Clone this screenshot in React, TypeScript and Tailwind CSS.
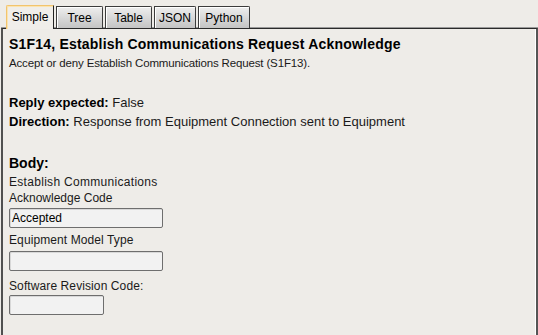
import React from "react";

function Tab({ children, selected, w }: { children: React.ReactNode; selected?: boolean; w: string }) {
  if (selected) {
    return (
      <div
        className={`${w} h-[24px] -mb-px flex items-center justify-center border-l border-t border-[#f2c46e] border-r border-r-[#222] bg-[#f0eeea] text-[12px] leading-none text-black shadow-[inset_1px_1px_0_#fbe4b0] rounded-tl-[2px]`}
      >
        <span className="-mt-[1px]">{children}</span>
      </div>
    );
  }
  return (
    <div
      className={`${w} h-[22px] flex items-center justify-center border border-b-0 border-[#3c3c3c] bg-linear-to-b from-[#eeeeee] to-[#c4c4c4] shadow-[inset_1px_1px_0_#ffffff] text-[12px] leading-none text-black rounded-tr-[2px]`}
    >
      <span className="mt-[1px]">{children}</span>
    </div>
  );
}

function Field({ w, value }: { w: string; value?: string }) {
  return (
    <div
      className={`${w} h-[20px] border border-[#6e6e6e] rounded-[2px] bg-[#f2f2f2] flex items-center pl-[2px] text-[12px] leading-none text-black shadow-[inset_1px_1px_0_#d8d8d8]`}
    >
      {value}
    </div>
  );
}

export default function App() {
  return (
    <div className="w-[538px] h-[335px] bg-[#eeece8] overflow-hidden flex flex-col font-['Liberation_Sans',Arial,sans-serif] text-black">
      <div className="flex items-end h-[28px] pl-[6px] gap-[2px] relative z-10">
        <Tab selected w="w-[48px]">Simple</Tab>
        <Tab w="w-[47px]">Tree</Tab>
        <Tab w="w-[47px]">Table</Tab>
        <Tab w="w-[42px]">JSON</Tab>
        <Tab w="w-[52px]">Python</Tab>
      </div>
      <div className="flex-1 ml-[1px] border-t border-t-[#2a2a2a] border-l-2 border-l-[#505050] border-r-2 border-r-[#555555] shadow-[0_-1px_0_#9a9a9a]">
        <div className="h-full border-r border-white pl-[6px] pt-[6px]">
          <div className="text-[14px] font-bold leading-[19px] tracking-[0.2px]">
            S1F14, Establish Communications Request Acknowledge
          </div>
          <div className="text-[11.5px] leading-[19px] text-[#1a1a1a] tracking-[-0.15px]">
            Accept or deny Establish Communications Request (S1F13).
          </div>
          <div className="h-[20px]" />
          <div className="text-[13px] leading-[19px] text-[#1a1a1a]">
            <span className="font-bold text-black">Reply expected:</span> False
          </div>
          <div className="text-[13px] leading-[19px] text-[#1a1a1a]">
            <span className="font-bold text-black">Direction:</span> Response from Equipment Connection sent to Equipment
          </div>
          <div className="h-[23px]" />
          <div className="text-[14px] font-bold leading-[19px]">Body:</div>
          <div className="text-[12px] leading-[17px] text-[#1a1a1a] tracking-[0.3px] mt-[1px]">Establish Communications</div>
          <div className="text-[12px] leading-[17px] text-[#1a1a1a] -mt-[1px]">Acknowledge Code</div>
          <div className="mt-[1px]">
            <Field w="w-[154px]" value="Accepted" />
          </div>
          <div className="mt-[4px] text-[12px] leading-[17px] text-[#1a1a1a] tracking-[0.1px]">Equipment Model Type</div>
          <div className="mt-[2px]">
            <Field w="w-[154px]" />
          </div>
          <div className="mt-[7px] text-[12px] leading-[17px] text-[#1a1a1a] tracking-[0.1px]">Software Revision Code:</div>
          <div>
            <Field w="w-[95px]" />
          </div>
        </div>
      </div>
    </div>
  );
}
